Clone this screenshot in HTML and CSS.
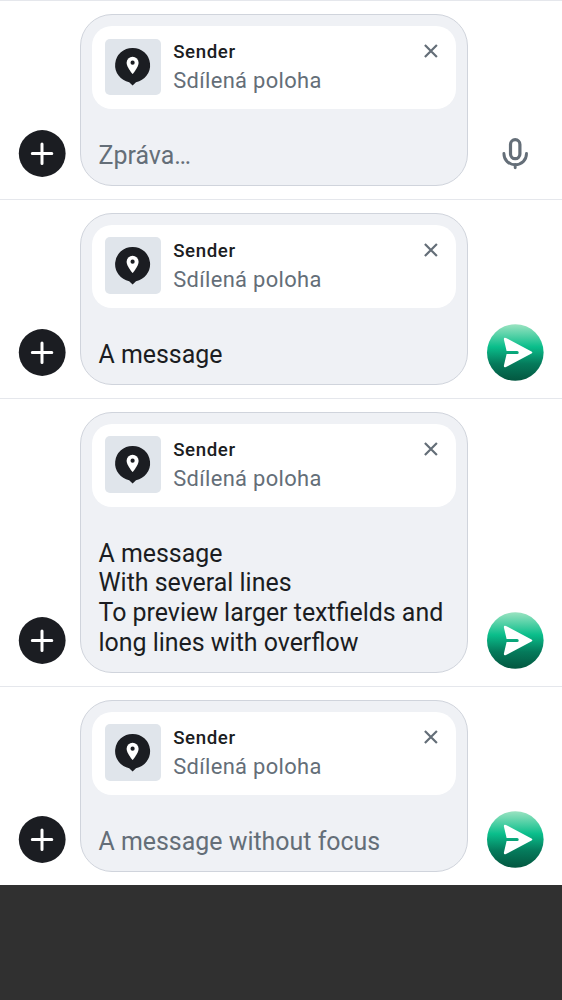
FILE: index.html
```html
<!DOCTYPE html>
<html lang="cs">
<head>
<meta charset="utf-8">
<title>Composer</title>
<link rel="stylesheet" href="styles.css">
</head>
<body>
<svg class="defs" width="0" height="0">
  <defs>
    <linearGradient id="green" x1="0" y1="0" x2="0" y2="1">
      <stop offset="0" stop-color="#9be3c1"/>
      <stop offset=".4" stop-color="#0abe8b"/>
      <stop offset=".7" stop-color="#057a5b"/>
      <stop offset="1" stop-color="#035740"/>
    </linearGradient>
    <symbol id="plus" viewBox="0 0 47 47">
      <circle cx="23.200" cy="23.500" r="23.400" fill="#1b1d22"/>
      <path d="M23 13.900v19.500M13.300 23.600h19.500" stroke="#fff" stroke-width="3" stroke-linecap="round"/>
    </symbol>
    <symbol id="pin" viewBox="0 0 36 40">
      <path d="M17.600 .9a17.300 17.300 0 0 1 3.400 34.300L17.600 38.500l-3.400-3.300A17.300 17.300 0 0 1 17.600 .9z" fill="#1b1d22"/>
      <path d="M17.600 9.700a6 6 0 0 0-6 6c0 4.500 6 11.300 6 11.300s6-6.800 6-11.300a6 6 0 0 0-6-6z" fill="#fff"/>
      <circle cx="17.600" cy="15.700" r="2.100" fill="#1b1d22"/>
    </symbol>
    <symbol id="close" viewBox="0 0 14 14">
      <path d="M.9 1l12 12M12.900 1L.9 13" stroke="#646e78" stroke-width="2.200"/>
    </symbol>
    <symbol id="mic" viewBox="0 0 26 32">
      <rect x="8.500" y="1.700" width="9.400" height="19" rx="4.700" fill="none" stroke="#646e78" stroke-width="3.200"/>
      <path d="M1.900 15.500c0 6.700 5 11.200 11.300 11.200s11.300-4.500 11.300-11.200M13.200 26.500v3.300" fill="none" stroke="#646e78" stroke-width="2.900" stroke-linecap="round"/>
    </symbol>
    <symbol id="send" viewBox="0 0 57 57">
      <circle cx="28.300" cy="28.500" r="28.300" fill="url(#green)"/>
      <path d="M19 14L44.500 27.400q1.700 1.100 0 2.200L19 43q-2.400.9-2.100-1.400L19.600 30.100h10.600a1.500 1.500 0 0 0 0-3H19.600L16.900 15.400q-.3-2.300 2.100-1.400z" fill="#fff"/>
    </symbol>
  </defs>
</svg>
<main class="list">
  <section class="row">
    <svg class="add"><use href="#plus"/></svg>
    <div class="bubble">
      <div class="quote">
        <div class="thumb"><svg class="pin"><use href="#pin"/></svg></div>
        <div class="info"><div class="sender">Sender</div><div class="kind">Sdílená poloha</div></div>
        <svg class="close"><use href="#close"/></svg>
      </div>
      <div class="text muted">Zpráva…</div>
    </div>
    <div class="action"><svg class="mic"><use href="#mic"/></svg></div>
  </section>
  <section class="row">
    <svg class="add"><use href="#plus"/></svg>
    <div class="bubble">
      <div class="quote">
        <div class="thumb"><svg class="pin"><use href="#pin"/></svg></div>
        <div class="info"><div class="sender">Sender</div><div class="kind">Sdílená poloha</div></div>
        <svg class="close"><use href="#close"/></svg>
      </div>
      <div class="text">A message</div>
    </div>
    <div class="action"><svg class="send"><use href="#send"/></svg></div>
  </section>
  <section class="row">
    <svg class="add"><use href="#plus"/></svg>
    <div class="bubble">
      <div class="quote">
        <div class="thumb"><svg class="pin"><use href="#pin"/></svg></div>
        <div class="info"><div class="sender">Sender</div><div class="kind">Sdílená poloha</div></div>
        <svg class="close"><use href="#close"/></svg>
      </div>
      <div class="text">A message<br>With several lines<br>To preview larger textfields and<br>long lines with overflow</div>
    </div>
    <div class="action"><svg class="send"><use href="#send"/></svg></div>
  </section>
  <section class="row">
    <svg class="add"><use href="#plus"/></svg>
    <div class="bubble">
      <div class="quote">
        <div class="thumb"><svg class="pin"><use href="#pin"/></svg></div>
        <div class="info"><div class="sender">Sender</div><div class="kind">Sdílená poloha</div></div>
        <svg class="close"><use href="#close"/></svg>
      </div>
      <div class="text muted">A message without focus</div>
    </div>
    <div class="action"><svg class="send"><use href="#send"/></svg></div>
  </section>
</main>
</body>
</html>
```
FILE: styles.css
```css
* { box-sizing: border-box; }
body {
  margin: 0;
  min-height: 1000px;
  background: #303030;
  font-family: Roboto, "Liberation Sans", sans-serif;
  color: #1b1d22;
}
svg { display: block; flex: none; overflow: visible; }
symbol { overflow: visible; }
.defs { position: absolute; }
.row {
  display: flex;
  align-items: flex-end;
  padding: 13px 0 12px 18.500px;
  border-top: 1px solid #e5e7ec;
  background: #fff;
}
.add { width: 47px; height: 47px; margin: 0 14.500px 10px 0; }
.bubble {
  width: 388px;
  margin-bottom: 1px;
  padding: 11px;
  border: 1px solid #d0d4dc;
  border-radius: 32px;
  background: #eff1f5;
}
.quote {
  display: flex;
  height: 83px;
  padding: 12.500px 18px 0 12.500px;
  border-radius: 20px;
  background: #fff;
}
.thumb {
  display: flex;
  justify-content: center;
  width: 56.500px;
  height: 56.500px;
  padding-top: 8.500px;
  border-radius: 5px;
  background: #e0e5eb;
}
.pin { width: 36px; height: 40px; }
.info { flex: 1; padding: .5px 0 0 12.200px; }
.sender {
  font-size: 18.700px;
  font-weight: 500;
  line-height: 26px;
  letter-spacing: .6px;
}
.kind {
  font-size: 21.900px;
  line-height: 30px;
  letter-spacing: .35px;
  color: #646e78;
  margin-top: 1px;
}
.close { width: 14px; height: 14px; margin-top: 5.500px; }
.text {
  padding: 31.600px 0 3.733px 6.500px;
  font-size: 24.930px;
  line-height: 29.667px;
  white-space: nowrap;
}
.muted { color: #646e78; }
.action {
  display: flex;
  justify-content: center;
  width: 94px;
}
.send { width: 57px; height: 57px; margin-bottom: 5px; }
.mic { width: 26px; height: 32px; margin-bottom: 17px; }
```
